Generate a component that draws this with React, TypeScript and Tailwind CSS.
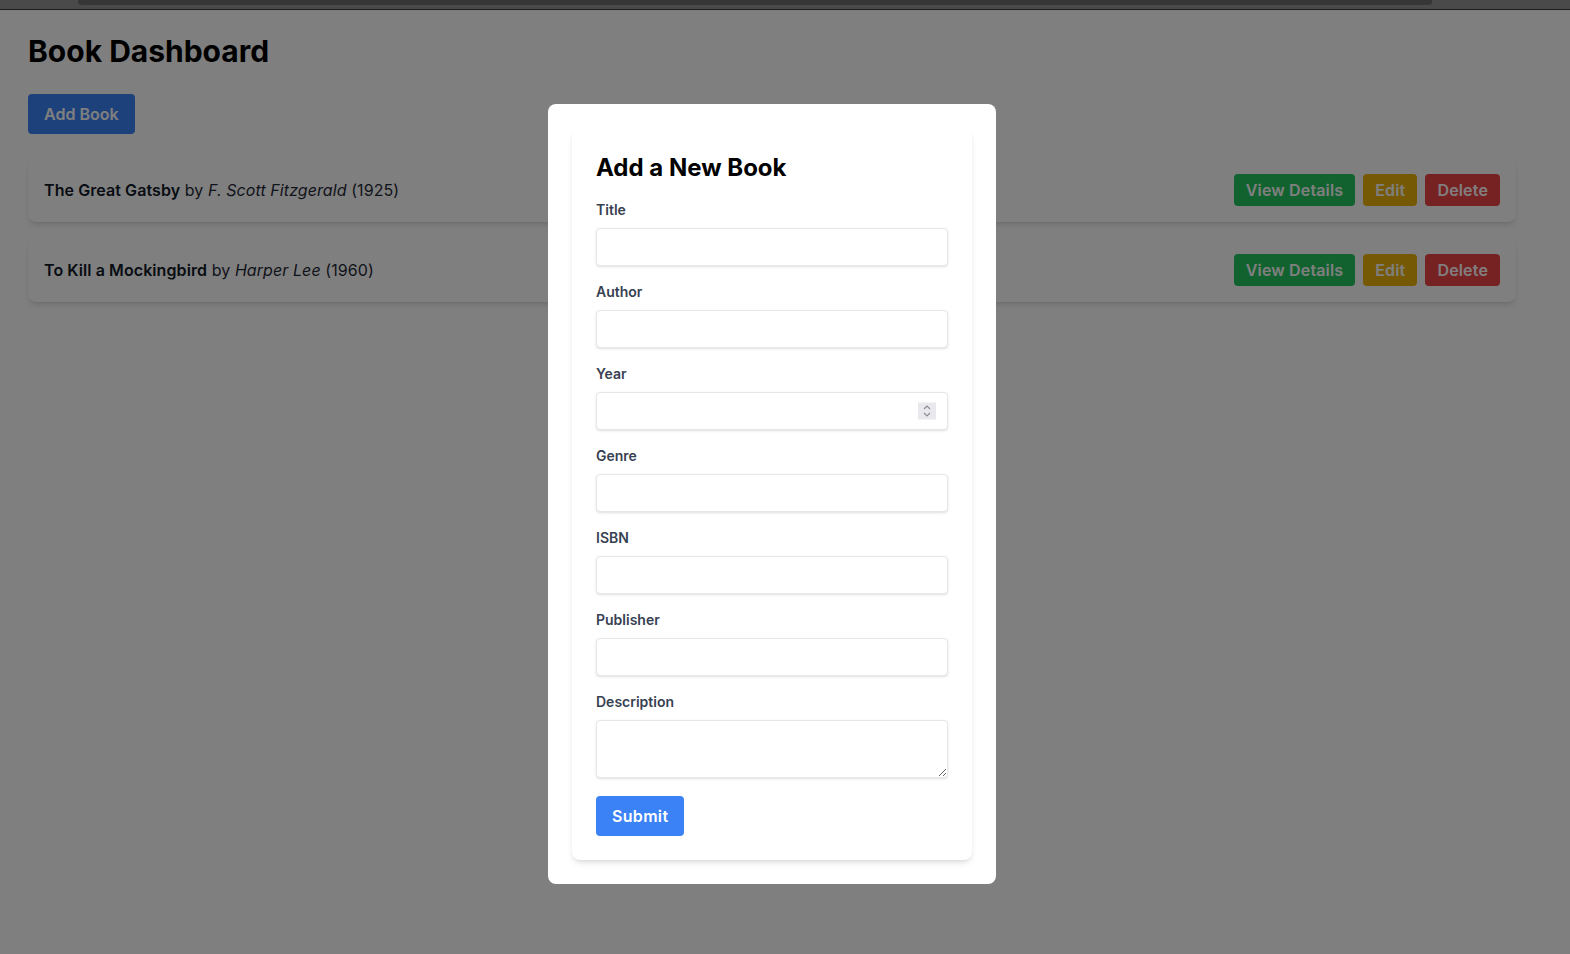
import { useState } from "react";

type Book = { title: string; author: string; year: number };

const books: Book[] = [
  { title: "The Great Gatsby", author: "F. Scott Fitzgerald", year: 1925 },
  { title: "To Kill a Mockingbird", author: "Harper Lee", year: 1960 },
];

const fields = ["Title", "Author", "Year", "Genre", "ISBN", "Publisher"];

function BookRow({ book }: { book: Book }) {
  return (
    <div className="flex items-center justify-between bg-white rounded-lg shadow-md p-4 mb-4">
      <div className="text-base text-[#1f2937] tracking-[0.005em]">
        <span className="font-semibold text-[#111827]">{book.title}</span> by{" "}
        <em>{book.author}</em> ({book.year})
      </div>
      <div className="flex gap-2 tracking-[0.01em]">
        <button className="bg-[#22c55e] text-white font-semibold px-3 py-1 rounded">View Details</button>
        <button className="bg-[#eab308] text-white font-semibold px-3 py-1 rounded">Edit</button>
        <button className="bg-[#ef4444] text-white font-semibold px-3 py-1 rounded">Delete</button>
      </div>
    </div>
  );
}

function Spinner() {
  return (
    <div className="absolute right-[12px] top-1/2 -translate-y-1/2 w-[18px] h-[17px] bg-[#e9e9ed] flex items-center justify-center pointer-events-none">
      <svg width="8" height="13" viewBox="0 0 8 13" fill="none" stroke="#8b8b96" strokeWidth="1.2">
        <path d="M1 4.5 L4 1.5 L7 4.5" />
        <path d="M1 8.5 L4 11.5 L7 8.5" />
      </svg>
    </div>
  );
}

export default function App() {
  const [open] = useState(true);

  return (
    <div className="min-h-screen bg-white font-['Inter','Liberation_Sans',sans-serif]">
      <div className="relative z-20 h-[9px] bg-[#4a4a4a] pl-[78px] pr-[138px]">
        <div className="h-[5px] bg-[#363636] rounded-b-[3px]" />
      </div>
      <div className="relative z-20 h-px bg-[#1e1e1e]" />

      <div className="pl-[28px] pr-[54px] pt-[23px]">
        <h1 className="text-3xl font-bold text-black mb-[25px]">Book Dashboard</h1>
        <button className="bg-[#3b82f6] text-white font-semibold px-4 py-2 rounded mb-6">Add Book</button>
        <div>
          {books.map((b) => (
            <BookRow key={b.title} book={b} />
          ))}
        </div>
      </div>

      {open && (
        <div className="fixed inset-x-0 bottom-0 top-[10px] z-10 bg-black/50 flex justify-center items-start pt-[94px] pr-[26px]">
          <div className="w-[448px] bg-white rounded-lg p-6">
            <div className="bg-white rounded-lg shadow-md p-6">
              <h2 className="text-2xl font-bold text-black mb-4">Add a New Book</h2>
              {fields.map((f) => (
                <div key={f} className="mb-4">
                  <label className="block text-sm font-semibold text-[#374151] mb-2">{f}</label>
                  <div className="relative">
                    <input
                      type="text"
                      inputMode={f === "Year" ? "numeric" : undefined}
                      className="block w-full h-[38px] px-3 py-2 text-sm border border-[#e5e7eb] rounded shadow-sm bg-white outline-none"
                    />
                    {f === "Year" && <Spinner />}
                  </div>
                </div>
              ))}
              <div className="mb-[18px]">
                <label className="block text-sm font-semibold text-[#374151] mb-2">Description</label>
                <textarea
                  rows={2}
                  className="block w-full h-[58px] px-3 py-2 text-sm border border-[#e5e7eb] rounded shadow-sm bg-white outline-none"
                />
              </div>
              <button className="bg-[#3b82f6] text-white font-semibold px-4 py-2 rounded tracking-[0.02em]">Submit</button>
            </div>
          </div>
        </div>
      )}
    </div>
  );
}
